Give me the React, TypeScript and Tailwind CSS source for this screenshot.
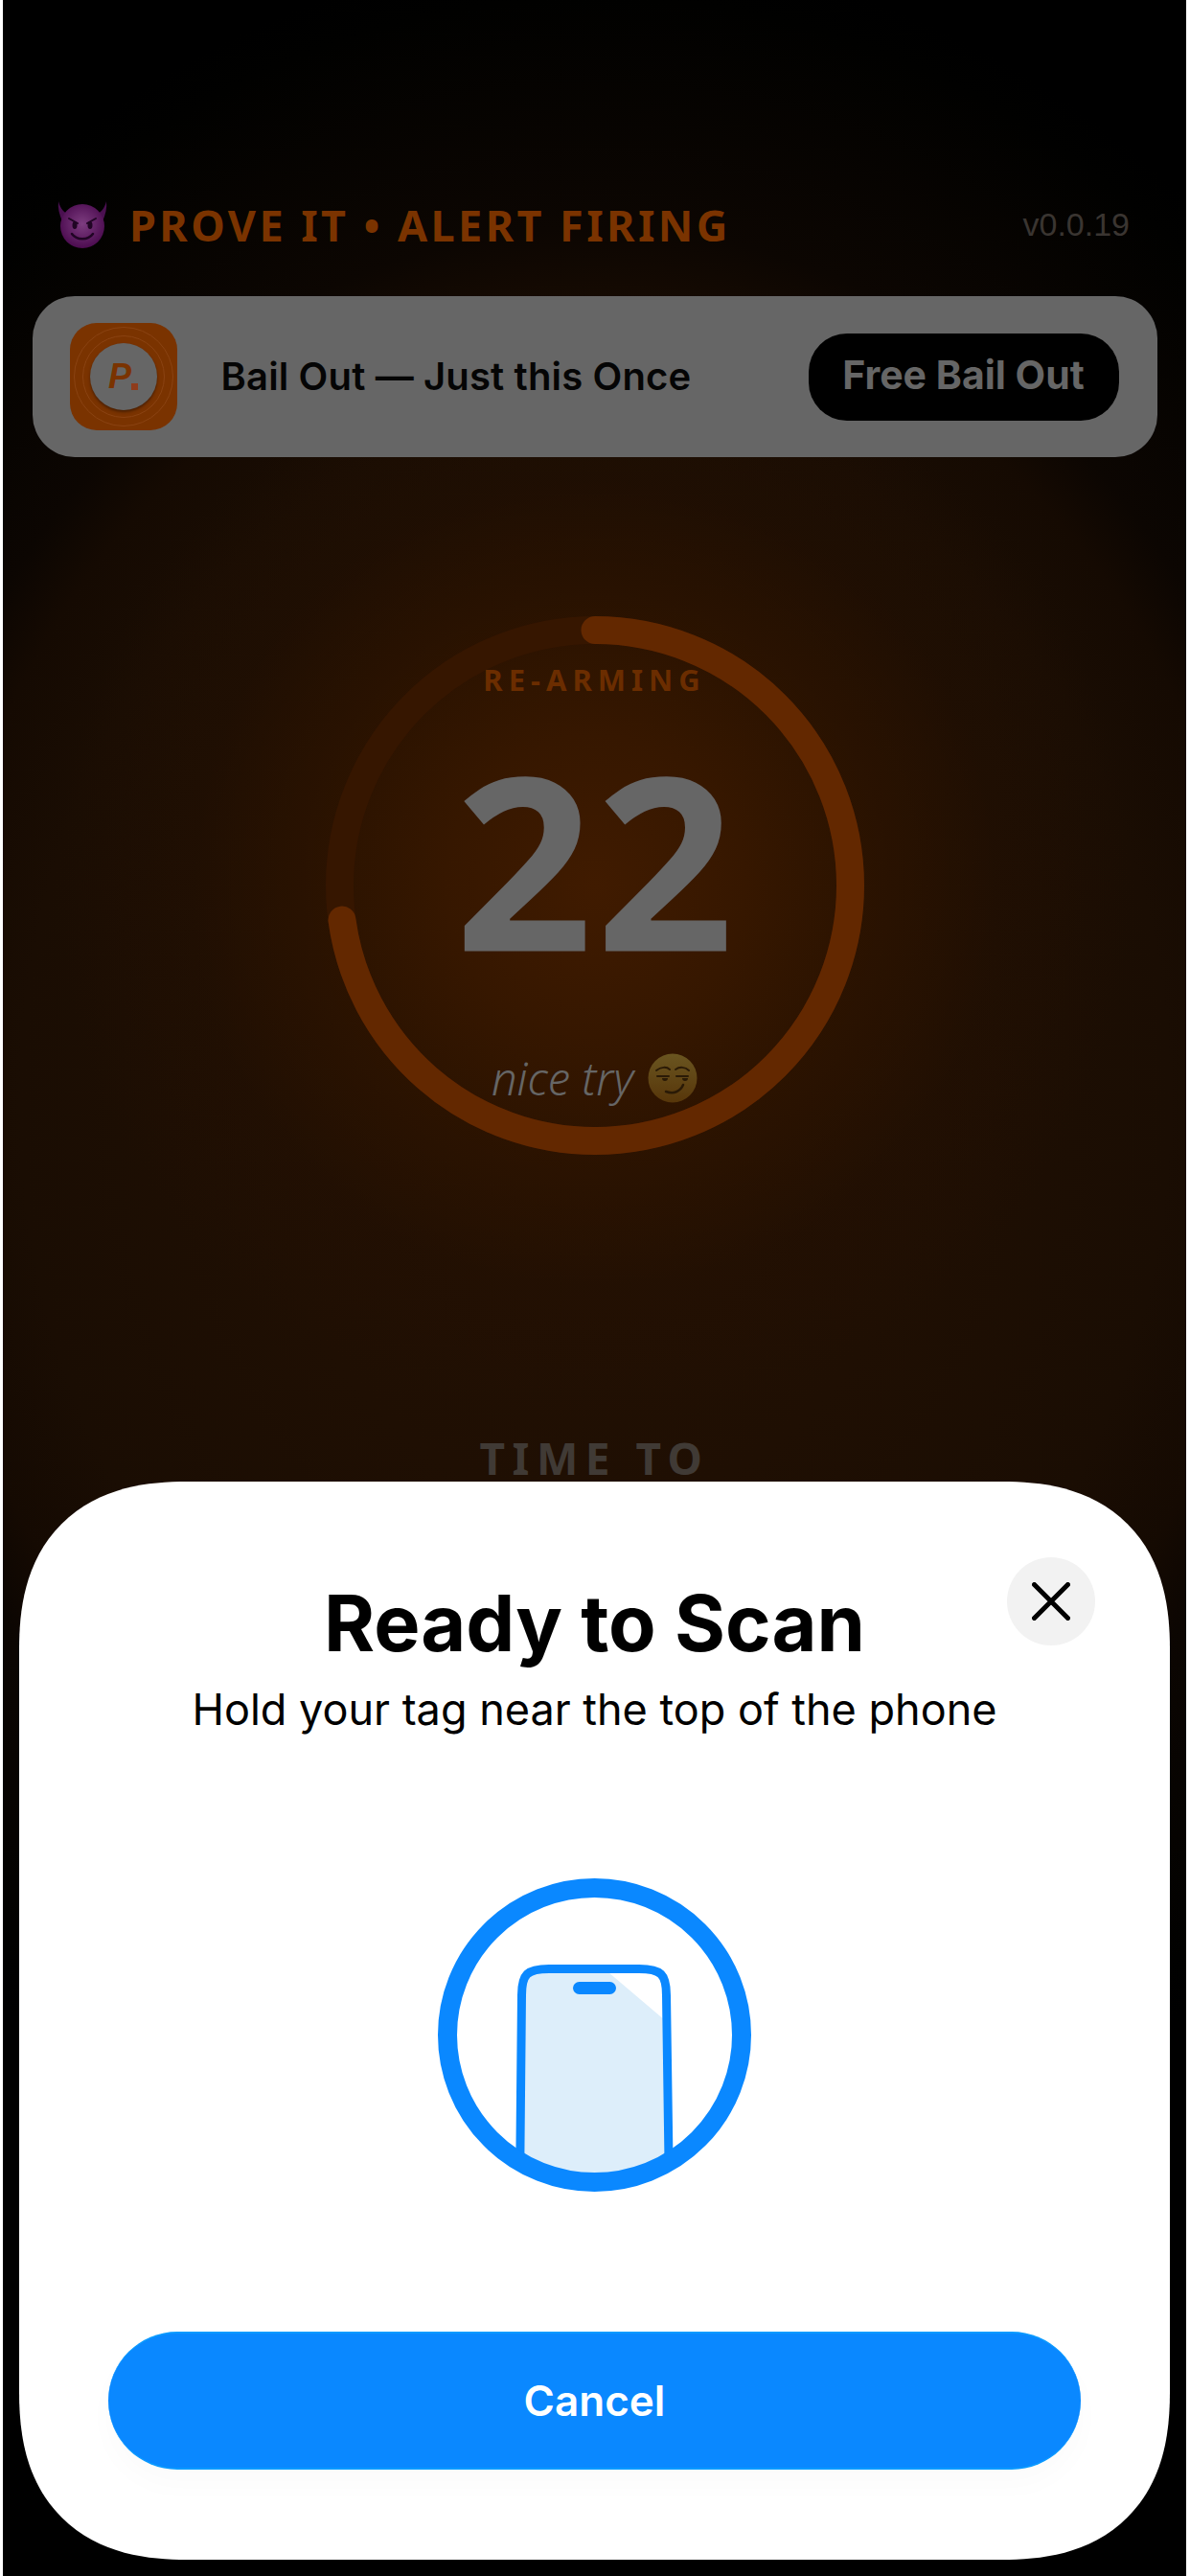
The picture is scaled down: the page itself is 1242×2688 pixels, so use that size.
const sans = "font-['Inter','Liberation_Sans',sans-serif]";

function Emoji({ kind }: { kind: "devil" | "smirk" }) {
  if (kind === "devil") {
    return (
      <svg viewBox="0 0 52 50" className="h-[50px] w-[52px] shrink-0">
        <defs>
          <radialGradient id="devil" cx="50%" cy="45%" r="55%">
            <stop offset="0%" stopColor="#7d3d80" />
            <stop offset="100%" stopColor="#4c0c50" />
          </radialGradient>
        </defs>
        <path d="M1 1 C3 9 7 13 12 15 L5 22 C2 15 0 8 1 1Z" fill="#4a1050" />
        <path d="M51 1 C49 9 45 13 40 15 L47 22 C50 15 52 8 51 1Z" fill="#4a1050" />
        <circle cx="26" cy="27" r="23" fill="url(#devil)" />
        <path d="M12 19 L21 24 M40 19 L31 24" stroke="#200524" strokeWidth="2" strokeLinecap="round" />
        <ellipse cx="18" cy="26" rx="2.5" ry="4" fill="#200524" />
        <ellipse cx="34" cy="26" rx="2.5" ry="4" fill="#200524" />
        <path d="M15 35 C20 42 32 42 37 35" fill="none" stroke="#200524" strokeWidth="2.5" strokeLinecap="round" />
      </svg>
    );
  }
  return (
    <svg viewBox="0 0 52 54" className="h-[54px] w-[52px] shrink-0">
      <defs>
        <linearGradient id="smirk" x1="0" y1="0" x2="0" y2="1">
          <stop offset="0%" stopColor="#6a5520" />
          <stop offset="100%" stopColor="#57360a" />
        </linearGradient>
      </defs>
      <circle cx="26" cy="27" r="25.5" fill="url(#smirk)" />
      <path d="M9 19 C14 15 20 15 23 18 M29 18 C33 15 39 15 43 19" fill="none" stroke="#2a1a06" strokeWidth="2" strokeLinecap="round" />
      <path d="M10 25 H22 M30 25 H42" stroke="#2a1a06" strokeWidth="2" strokeLinecap="round" />
      <path d="M15 27 a3 3 0 0 0 6 0Z M36 27 a3 3 0 0 0 6 0Z" fill="#2a1a06" />
      <path d="M19 41 C27 44 34 41 37 34" fill="none" stroke="#2a1a06" strokeWidth="2.5" strokeLinecap="round" />
    </svg>
  );
}

function AppIcon() {
  return (
    <div className="relative flex h-[112px] w-[112px] shrink-0 items-center justify-center overflow-hidden rounded-[28px] bg-[#7a3300]">
      <div className="absolute h-[104px] w-[104px] rounded-full border border-[#8a4312]" />
      <div className="absolute h-[86px] w-[86px] rounded-full border border-[#8a4312]" />
      <div className="relative flex h-[70px] w-[70px] items-center justify-center rounded-full bg-[#666666] shadow-[0_2px_3px_#4a1f00]">
        <span className="font-['Liberation_Sans',sans-serif] text-[36px] font-bold italic text-[#7a3300]">P</span>
        <span className="mt-[20px] h-[7px] w-[7px] bg-[#8f3c1c]" />
      </div>
    </div>
  );
}

function PhoneGlyph() {
  return (
    <svg viewBox="0 0 327 327" className="h-[327px] w-[327px]">
      <defs>
        <clipPath id="ring">
          <circle cx="163.5" cy="163.5" r="153.5" />
        </clipPath>
      </defs>
      <g clipPath="url(#ring)">
        <path
          d="M85.5 330 L87.5 122 C87.5 100 93 94.5 116 94.5 H210 C233 94.5 238.5 100 238.5 122 L241.5 330 Z"
          fill="#ddeefa"
        />
        <path d="M178 98 H212 C230 99 234 104 234.5 122 V146 Z" fill="#ffffff" />
        <path
          d="M85.5 330 L87.5 122 C87.5 100 93 94.5 116 94.5 H210 C233 94.5 238.5 100 238.5 122 L241.5 330"
          fill="none"
          stroke="#0a88ff"
          strokeWidth="9"
        />
      </g>
      <circle cx="163.5" cy="163.5" r="153.5" fill="none" stroke="#0a88ff" strokeWidth="20" />
      <rect x="141" y="108" width="45" height="13" rx="6.5" fill="#0a88ff" />
    </svg>
  );
}

export default function App() {
  const r = 266.5;
  const circumference = 2 * Math.PI * r;
  // the countdown has used up about a quarter of the ring
  const progress = 0.728;

  return (
    <div className="relative h-[2688px] w-[1242px] overflow-hidden bg-white">
      {/* dimmed alarm screen */}
      <div className="ml-[3px] flex h-full w-[1235px] flex-col items-center bg-[radial-gradient(circle_560px_at_618px_924px,#401b00_0%,#361700_28%,rgba(44,19,0,0.85)_52%,rgba(36,16,2,0.4)_75%,rgba(30,14,3,0)_100%),radial-gradient(ellipse_1000px_1200px_at_618px_1150px,#241103_0%,#1f0f03_35%,#1a0d03_60%,#150a02_70%,#0c0602_76%,#010100_96%,#000000_100%)]">
        <header className="mt-[208px] flex h-[52px] w-full items-center pl-[57px] pr-[59px]">
          <Emoji kind="devil" />
          <h1 className="ml-[23px] font-['Noto_Sans',sans-serif] text-[45px] font-bold leading-none tracking-[3.4px] text-[#7a3300]">
            PROVE IT • ALERT FIRING
          </h1>
          <span className="ml-auto font-['Liberation_Sans',sans-serif] text-[34px] leading-none text-[#3a3531]">
            v0.0.19
          </span>
        </header>

        <section className="mt-[49px] flex h-[168px] w-[1174px] items-center rounded-[44px] bg-[#666666] pl-[39px] pr-[40px]">
          <AppIcon />
          <p className={`${sans} ml-[46px] text-[40px] font-semibold leading-none tracking-[0.15px] text-[#050505]`}>
            Bail Out — Just this Once
          </p>
          <button className={`${sans} ml-auto h-[91px] w-[324px] rounded-[40px] bg-black pb-[2px] text-[41px] font-bold text-[#666666]`}>
            Free Bail Out
          </button>
        </section>

        <div className="relative mt-[166px] flex h-[562px] w-[562px] flex-col items-center">
          <svg viewBox="0 0 562 562" className="absolute inset-0 h-full w-full -rotate-90">
            <circle cx="281" cy="281" r={r} fill="none" stroke="#361600" strokeWidth="29" />
            <circle
              cx="281"
              cy="281"
              r={r}
              fill="none"
              stroke="#632800"
              strokeWidth="29"
              strokeLinecap="round"
              strokeDasharray={`${circumference * progress} ${circumference}`}
            />
          </svg>
          <span className="relative mt-[49px] font-['Noto_Sans',sans-serif] text-[31px] font-bold leading-[34px] tracking-[6px] text-[#6b2d00]">
            RE-ARMING
          </span>
          <span className="relative ml-[3px] mt-[60px] font-['Noto_Sans',sans-serif] text-[252px] font-bold leading-[220px] tracking-[3px] text-[#666666]">
            22
          </span>
          <div className="relative mt-[92px] flex items-center gap-[15px]">
            <span className="font-['Noto_Sans',sans-serif] text-[47px] font-light italic leading-[54px] text-[#666666]">
              nice try
            </span>
            <Emoji kind="smirk" />
          </div>
        </div>

        <p className="mt-[293px] font-['Noto_Sans',sans-serif] text-[46px] font-bold leading-none tracking-[7.5px] text-[#403a35]">
          TIME TO
        </p>
      </div>

      {/* NFC scan sheet */}
      <div className="absolute left-[20px] top-[1546px] flex h-[1125px] w-[1201px] flex-col items-center rounded-[175px] bg-white [corner-shape:superellipse(1.25)]">
        <button className="absolute right-[78px] top-[79px] flex h-[92px] w-[92px] items-center justify-center rounded-full bg-[#f2f2f2]">
          <svg viewBox="0 0 40 40" className="h-[40px] w-[40px]">
            <path d="M2.5 2.5 L37.5 37.5 M37.5 2.5 L2.5 37.5" stroke="#000000" strokeWidth="5" strokeLinecap="round" />
          </svg>
        </button>
        <h2 className={`${sans} mt-[100px] text-[81px] font-bold leading-[96px] text-black`}>
          Ready to Scan
        </h2>
        <p className={`${sans} mt-[14px] text-[45px] font-normal leading-[56px] text-black`}>
          Hold your tag near the top of the phone
        </p>
        <div className="mt-[148px]">
          <PhoneGlyph />
        </div>
        <button className={`${sans} mt-[146px] h-[144px] w-[1015px] rounded-[72px] border-y-2 border-[#0a9aff] bg-[#0a88ff] text-[44px] font-semibold text-white shadow-[0_16px_30px_rgba(0,0,0,0.02)]`}>
          Cancel
        </button>
      </div>
    </div>
  );
}
